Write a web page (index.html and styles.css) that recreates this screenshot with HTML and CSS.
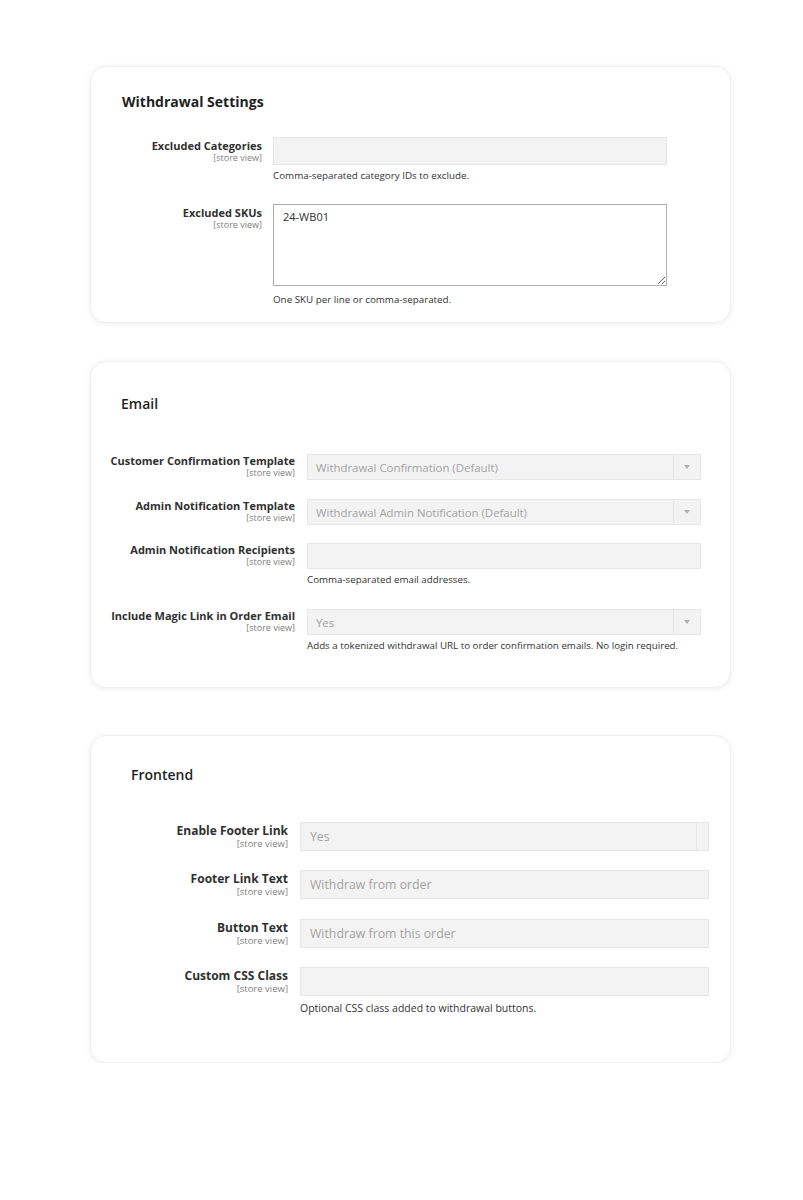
FILE: index.html
```html
<!DOCTYPE html>
<html>
	<head>
		<meta charset="utf-8">
		<title>Withdrawal configuration</title>
		<link rel="stylesheet" href="styles.css">
	</head>
	<body>
		<div class="page">
			<!-- withdrawal settings -->
			<div class="card card-settings">
				<h2 class="card-title">Withdrawal Settings</h2>
				<div class="row">
					<div class="label"><span class="name">Excluded Categories</span><span class="scope">[store view]</span></div>
					<div class="control">
						<div class="field"></div>
						<div class="note">Comma-separated category IDs to exclude.</div>
					</div>
				</div>
				<div class="row">
					<div class="label"><span class="name">Excluded SKUs</span><span class="scope">[store view]</span></div>
					<div class="control">
						<textarea class="area" readonly>24-WB01</textarea>
						<div class="note note-area">One SKU per line or comma-separated.</div>
					</div>
				</div>
			</div>

			<!-- email -->
			<div class="card card-email">
				<h2 class="card-title">Email</h2>
				<div class="row">
					<div class="label"><span class="name">Customer Confirmation Template</span><span class="scope">[store view]</span></div>
					<div class="control">
						<div class="field select"><span class="value">Withdrawal Confirmation (Default)</span><span class="arrow"></span></div>
					</div>
				</div>
				<div class="row">
					<div class="label"><span class="name">Admin Notification Template</span><span class="scope">[store view]</span></div>
					<div class="control">
						<div class="field select"><span class="value">Withdrawal Admin Notification (Default)</span><span class="arrow"></span></div>
					</div>
				</div>
				<div class="row">
					<div class="label"><span class="name">Admin Notification Recipients</span><span class="scope">[store view]</span></div>
					<div class="control">
						<div class="field"></div>
						<div class="note">Comma-separated email addresses.</div>
					</div>
				</div>
				<div class="row">
					<div class="label"><span class="name">Include Magic Link in Order Email</span><span class="scope">[store view]</span></div>
					<div class="control">
						<div class="field select"><span class="value">Yes</span><span class="arrow"></span></div>
						<div class="note">Adds a tokenized withdrawal URL to order confirmation emails. No login required.</div>
					</div>
				</div>
			</div>

			<!-- frontend -->
			<div class="card card-front">
				<h2 class="card-title">Frontend</h2>
				<div class="row">
					<div class="label"><span class="name">Enable Footer Link</span><span class="scope">[store view]</span></div>
					<div class="control">
						<div class="field select"><span class="value">Yes</span><span class="arrow blank"></span></div>
					</div>
				</div>
				<div class="row">
					<div class="label"><span class="name">Footer Link Text</span><span class="scope">[store view]</span></div>
					<div class="control">
						<div class="field"><span class="value">Withdraw from order</span></div>
					</div>
				</div>
				<div class="row">
					<div class="label"><span class="name">Button Text</span><span class="scope">[store view]</span></div>
					<div class="control">
						<div class="field"><span class="value">Withdraw from this order</span></div>
					</div>
				</div>
				<div class="row">
					<div class="label"><span class="name">Custom CSS Class</span><span class="scope">[store view]</span></div>
					<div class="control">
						<div class="field"></div>
						<div class="note">Optional CSS class added to withdrawal buttons.</div>
					</div>
				</div>
			</div>
		</div>
	</body>
</html>
```

FILE: styles.css
```css
*{
	margin: 0;
	padding: 0;
	box-sizing: border-box;
}
body{
	background-color: #ffffff;
	font-family: "Open Sans", "Liberation Sans", sans-serif;
	color: #303030;
}
.page{
	display: flex;
	flex-direction: column;
	padding: 66px 0 0 90px;
}
.card{
	width: 641px;
	background-color: #ffffff;
	border: 1px solid #f0f0f0;
	border-radius: 16px;
	box-shadow: 0 1px 6px rgba(0, 0, 0, 0.07);
}
.card-title{
	font-size: 14px;
	line-height: 20px;
	color: #1f1f1f;
}
.row{
	display: grid;
}
.label{
	display: flex;
	flex-direction: column;
	align-items: flex-end;
	text-align: right;
}
.name{
	font-weight: 700;
	color: #303030;
}
.scope{
	color: #808080;
	font-size: 9px;
	line-height: 10px;
}
.field{
	background-color: #f3f3f3;
	border: 1px solid #e6e6e6;
	display: flex;
	align-items: center;
	color: #a3a3a3;
}
.field .value{
	flex: 1;
}
.select .arrow{
	width: 27px;
	height: 100%;
	border-left: 1px solid #e4e4e4;
	position: relative;
}
.select .arrow::after{
	content: "";
	position: absolute;
	left: 50%;
	top: 50%;
	margin: -2px 0 0 -3px;
	border-left: 3px solid transparent;
	border-right: 3px solid transparent;
	border-top: 4px solid #b0b0b0;
}
.select .arrow.blank::after{
	display: none;
}
.area{
	display: block;
	width: 100%;
	height: 82px;
	border: 1px solid #adadad;
	background: #ffffff;
	font-family: "Open Sans", "Liberation Sans", sans-serif;
	font-size: 11px;
	line-height: 16px;
	color: #303030;
	padding: 4px 9px;
	resize: vertical;
	outline: none;
}
.note{
	font-size: 9.8px;
	line-height: 14px;
	color: #333333;
}

/* withdrawal settings */
.card-settings{
	padding: 25px 0 15px 0;
}
.card-settings .card-title{
	font-weight: 700;
	padding-left: 31px;
	margin-bottom: 25px;
}
.card-settings .row{
	grid-template-columns: 171px 394px;
	column-gap: 11px;
	margin-bottom: 21px;
}
.card-settings .row:last-child{
	margin-bottom: 0;
}
.card-settings .name{
	font-size: 11px;
	line-height: 14px;
	padding-top: 2px;
}
.card-settings .field{
	height: 28px;
}
.card-settings .note{
	margin-top: 4px;
}
.card-settings .note-area{
	margin-top: 7px;
}

/* email */
.card-email{
	margin-top: 38px;
	padding: 32px 0 34px 0;
}
.card-email .card-title{
	font-weight: 600;
	padding-left: 30px;
	margin-bottom: 40px;
}
.card-email .row{
	grid-template-columns: 204px 394px;
	column-gap: 12px;
	margin-bottom: 19px;
}
.card-email .row:nth-child(3){
	margin-bottom: 18px;
}
.card-email .row:nth-child(4){
	margin-bottom: 22px;
}
.card-email .row:last-child{
	margin-bottom: 0;
}
.card-email .name{
	font-size: 11px;
	line-height: 14px;
}
.card-email .field{
	height: 26px;
	font-size: 11.4px;
	padding-left: 8px;
}
.card-email .note{
	margin-top: 4px;
	font-size: 9.75px;
}

/* frontend */
.card-front{
	margin-top: 47px;
	padding: 29px 0 47px 0;
}
.card-front .card-title{
	font-weight: 600;
	padding-left: 40px;
	margin-bottom: 37px;
}
.card-front .row{
	grid-template-columns: 197px 409px;
	column-gap: 12px;
	margin-bottom: 19px;
}
.card-front .row:nth-child(3){
	margin-bottom: 20px;
}
.card-front .row:last-child{
	margin-bottom: 0;
}
.card-front .name{
	font-size: 12px;
	line-height: 15px;
	padding-top: 1px;
}
.card-front .scope{
	font-size: 9.5px;
	line-height: 11px;
}
.card-front .field{
	height: 29px;
	font-size: 12.3px;
	padding-left: 9px;
}
.card-front .select .arrow{
	width: 12px;
}
.card-front .note{
	margin-top: 5px;
	font-size: 10.5px;
}
```
